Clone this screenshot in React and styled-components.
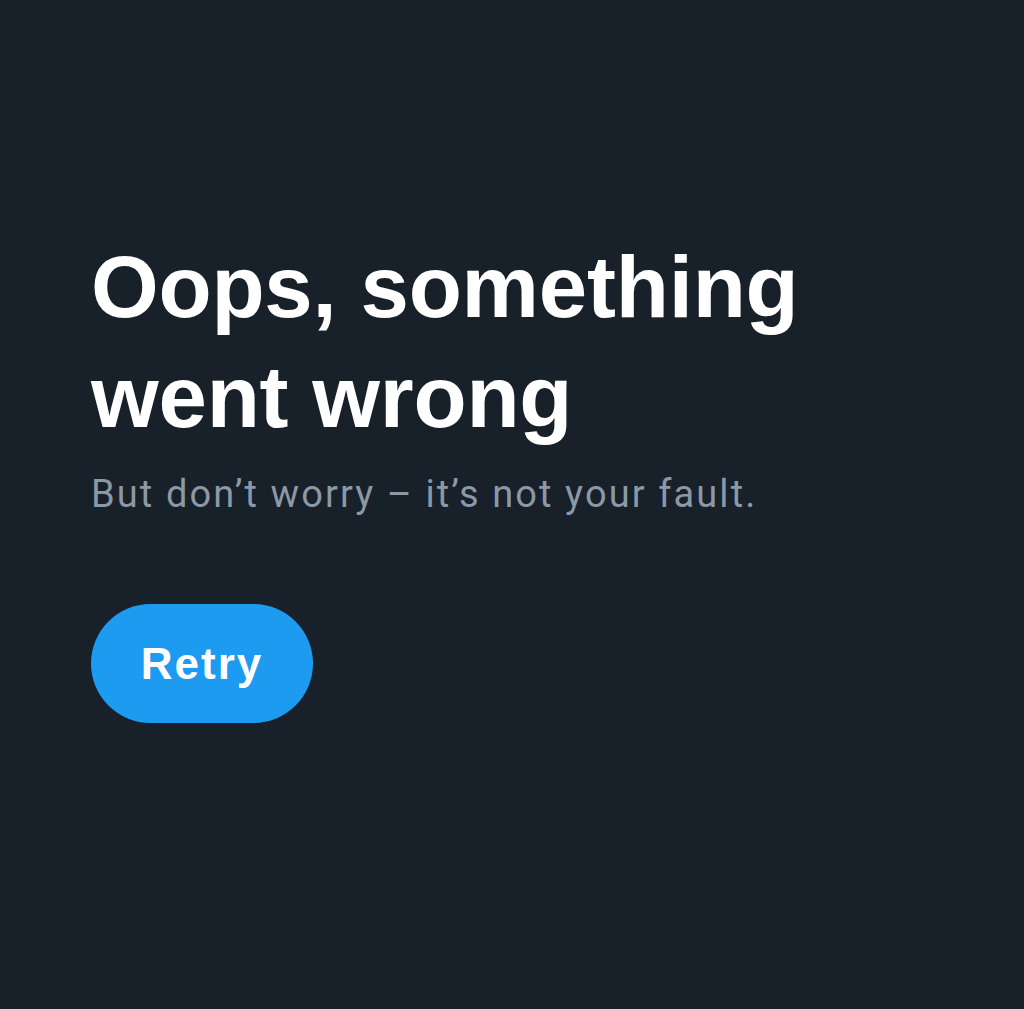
import React from "react";
import styled, { createGlobalStyle } from "styled-components";

const GlobalStyle = createGlobalStyle`
  html, body {
    margin: 0;
    padding: 0;
    background: #18202a;
  }
`;

const Page = styled.div`
  min-height: 1009px;
  background: #18202a;
  padding: 232px 0 0 91px;
  box-sizing: border-box;
  display: flex;
  flex-direction: column;
  align-items: flex-start;
`;

const Title = styled.h1`
  margin: 0;
  color: #ffffff;
  font-family: "Liberation Sans", Arial, sans-serif;
  font-weight: 700;
  font-size: 87px;
  line-height: 110px;
  letter-spacing: -0.2px;
`;

const Subtitle = styled.p`
  margin: 20px 0 0;
  color: #8b98a5;
  font-family: Roboto, "Noto Sans", sans-serif;
  font-weight: 400;
  font-size: 38px;
  line-height: 44px;
  letter-spacing: 2.1px;
`;

const RetryButton = styled.button`
  margin-top: 88px;
  width: 222px;
  height: 119px;
  border: none;
  border-radius: 60px;
  background: #1d9bf0;
  color: #ffffff;
  font-family: "Liberation Sans", Arial, sans-serif;
  font-weight: 700;
  font-size: 44px;
  letter-spacing: 2px;
  cursor: pointer;
`;

export default function App() {
  return (
    <>
      <GlobalStyle />
      <Page>
        <Title>
          Oops, something
          <br />
          went wrong
        </Title>
        <Subtitle>But don’t worry – it’s not your fault.</Subtitle>
        <RetryButton>Retry</RetryButton>
      </Page>
    </>
  );
}
